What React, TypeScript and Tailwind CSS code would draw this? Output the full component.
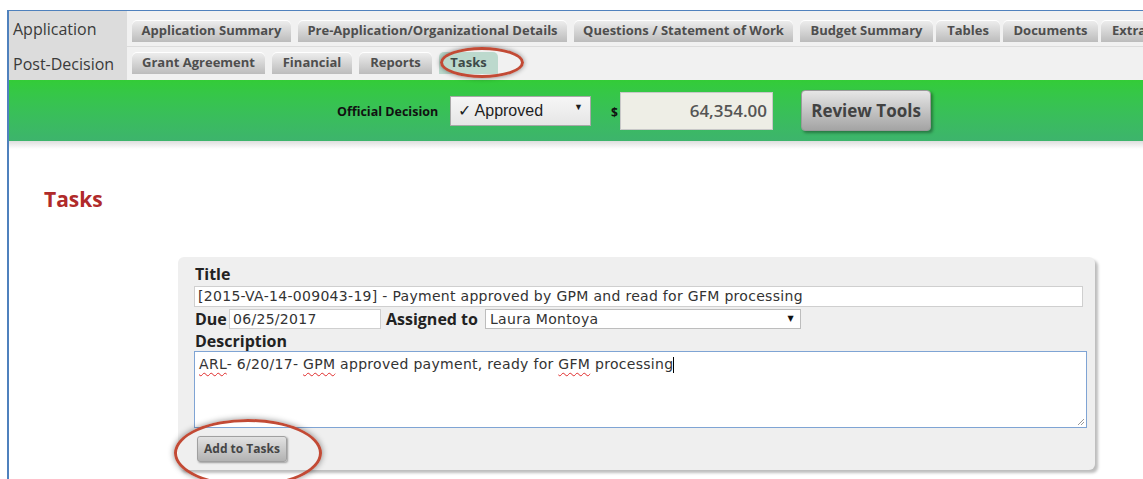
import React from 'react';

type Tab = { label: string; cls: string; active?: boolean };

const appTabs: Tab[] = [
  { label: 'Application Summary', cls: 'w-[159px]' },
  { label: 'Pre-Application/Organizational Details', cls: 'w-[269px] ml-[7px]' },
  { label: 'Questions / Statement of Work', cls: 'w-[219px] ml-[7px]' },
  { label: 'Budget Summary', cls: 'w-[133px] ml-[7px]' },
  { label: 'Tables', cls: 'w-[64px] ml-[3px]' },
  { label: 'Documents', cls: 'w-[95px] ml-[3px]' },
  { label: 'Extras', cls: 'w-[70px] ml-[3px] justify-start pl-[11px]' },
];

const postTabs: Tab[] = [
  { label: 'Grant Agreement', cls: 'w-[133px]' },
  { label: 'Financial', cls: 'w-[80px] ml-[7px]' },
  { label: 'Reports', cls: 'w-[73px] ml-[7px]' },
  { label: 'Tasks', cls: 'w-[59px] ml-[7px]', active: true },
];

function TabButton({ tab }: { tab: Tab }) {
  return (
    <div
      className={`flex h-[22px] shrink-0 items-center justify-center rounded-t-[5px] text-[13px] font-bold whitespace-nowrap ${
        tab.active
          ? 'bg-[#bcd9cd] text-[#3d4a48]'
          : 'bg-linear-to-b from-[#efefef] to-[#bcbcbc] text-[#4e4e4e] shadow-[inset_0_1px_0_#ffffff]'
      } ${tab.cls}`}
    >
      {tab.label}
    </div>
  );
}

function Misspelled({ children }: { children: React.ReactNode }) {
  return (
    <span className="underline decoration-wavy decoration-[#e02b2b] decoration-1 underline-offset-[3px]">
      {children}
    </span>
  );
}

const field = "font-['DejaVu_Sans',sans-serif] text-[14px] tracking-[0.3px] text-[#333]";

export default function App() {
  return (
    <div className="relative h-[479px] w-[1143px] overflow-hidden bg-white font-['Open_Sans',sans-serif] text-[#333]">
      <div className="mt-[10px] ml-[7px] h-[469px] border-t border-l-2 border-[#4f81bd]">
        {/* section tabs */}
        <div className="flex">
          <div className="w-[118px] shrink-0 bg-[#dcdcdc] text-[16px] text-[#3a3a3a]">
            <div className="flex h-[36px] items-center pl-[4px]">Application</div>
            <div className="flex h-[33px] items-center pl-[4px]">Post-Decision</div>
          </div>
          <div className="min-w-0 flex-1 overflow-hidden bg-[#f1f1f1]">
            <div className="flex h-[36px] border-b border-[#dcdcdc] pt-[9px] pl-[5px]">
              {appTabs.map(t => (
                <TabButton key={t.label} tab={t} />
              ))}
            </div>
            <div className="flex h-[33px] pt-[5px] pl-[5px]">
              {postTabs.map(t => (
                <TabButton key={t.label} tab={t} />
              ))}
            </div>
          </div>
        </div>

        {/* decision bar */}
        <div className="flex h-[61px] items-center bg-linear-to-b from-[#33cc37] to-[#3db46c] pl-[328px]">
          <span className="mt-[4px] w-[103px] text-[12.5px] font-bold whitespace-nowrap text-[#111]">Official Decision</span>
          <div className="ml-[10px] flex h-[30px] w-[141px] items-center justify-between border border-[#a8a8a8] bg-linear-to-b from-[#f6f6f6] to-[#e6e6e6] pr-[7px] pl-[7px] font-['Liberation_Sans',sans-serif] text-[16px] text-[#1e1e1e]">
            <span>✓ Approved</span>
            <span className="mb-[6px] text-[9px]">▼</span>
          </div>
          <span className="mt-[4px] ml-[20px] w-[9px] text-[12px] font-bold text-[#111]">$</span>
          <div className="flex h-[38px] w-[153px] items-center justify-end border border-[#c8c8c8] bg-[#eeeee6] pr-[5px] text-[17px] font-semibold text-[#555]">
            64,354.00
          </div>
          <button className="ml-[28px] h-[41px] w-[130px] rounded-[4px] border border-[#9a9a9a] bg-linear-to-b from-[#e6e6e6] to-[#a4a4a4] text-[17px] font-bold text-[#424242] shadow-[2px_2px_3px_rgba(0,0,0,0.35)]">
            Review Tools
          </button>
        </div>
        <div className="h-[8px] bg-linear-to-b from-[#dedede] to-white" />

        {/* tasks */}
        <h2 className="mt-[36px] pl-[35px] text-[21px] leading-[28px] font-bold text-[#b02a2a]">Tasks</h2>

        <div className="mt-[44px] ml-[169px] h-[213px] w-[917px] rounded-[6px] bg-[#efefef] pt-[7px] pl-[16px] shadow-[3px_3px_3px_#bdbdbd]">
          <div className="pl-[1px] text-[16px] leading-[20px] font-bold text-[#222]">Title</div>
          <div className={`mt-[2px] flex h-[21px] w-[889px] items-center border border-[#cfcfcf] bg-white pl-[3px] ${field}`}>
            [2015-VA-14-009043-19] - Payment approved by GPM and read for GFM processing
          </div>

          <div className="mt-[2px] flex h-[20px] items-center">
            <span className="w-[35px] pl-[1px] text-[16px] font-bold text-[#222]">Due</span>
            <div className={`flex h-[20px] w-[152px] items-center border border-[#cfcfcf] bg-white pl-[3px] ${field}`}>
              06/25/2017
            </div>
            <span className="ml-[5px] w-[99px] text-[16px] font-bold whitespace-nowrap text-[#222]">Assigned to</span>
            <div className={`flex h-[20px] w-[316px] items-center justify-between border border-[#bdbdbd] bg-white pr-[6px] pl-[4px] ${field}`}>
              <span>Laura Montoya</span>
              <span className="text-[8px] text-[#111]">▼</span>
            </div>
          </div>

          <div className="mt-[2px] pl-[1px] text-[16px] leading-[20px] font-bold text-[#222]">Description</div>
          <div className={`relative h-[77px] w-[893px] border border-[#7fa4d4] bg-white pt-[4px] pl-[4px] leading-[17px] ${field}`}>
            <Misspelled>ARL</Misspelled>- 6/20/17- <Misspelled>GPM</Misspelled> approved payment, ready for{' '}
            <Misspelled>GFM</Misspelled> processing
            <span className="inline-block h-[16px] w-px bg-black align-middle" />
            <svg className="absolute right-[1px] bottom-[1px]" width="9" height="9" viewBox="0 0 9 9">
              <path d="M8 2 2 8M8 5 5 8" stroke="#9a9a9a" strokeWidth="1" />
            </svg>
          </div>

          <button className="mt-[8px] ml-[3px] h-[26px] w-[90px] rounded-[3px] border border-[#a0a0a0] bg-linear-to-b from-[#e2e2e2] to-[#b2b2b2] text-[12px] font-bold text-[#454545] shadow-[1px_1px_2px_rgba(0,0,0,0.35)]">
            Add to Tasks
          </button>
        </div>
      </div>

      {/* callout rings */}
      <div className="absolute top-[47px] left-[440px] h-[31px] w-[84px] rounded-[50%] border-[3px] border-[#c24a35] shadow-[0_0_5px_rgba(0,0,0,0.45)]" />
      <div className="absolute top-[419px] left-[174px] h-[68px] w-[148px] rounded-[50%] border-[3px] border-[#c24a35] shadow-[0_0_6px_rgba(0,0,0,0.45)]" />
    </div>
  );
}
